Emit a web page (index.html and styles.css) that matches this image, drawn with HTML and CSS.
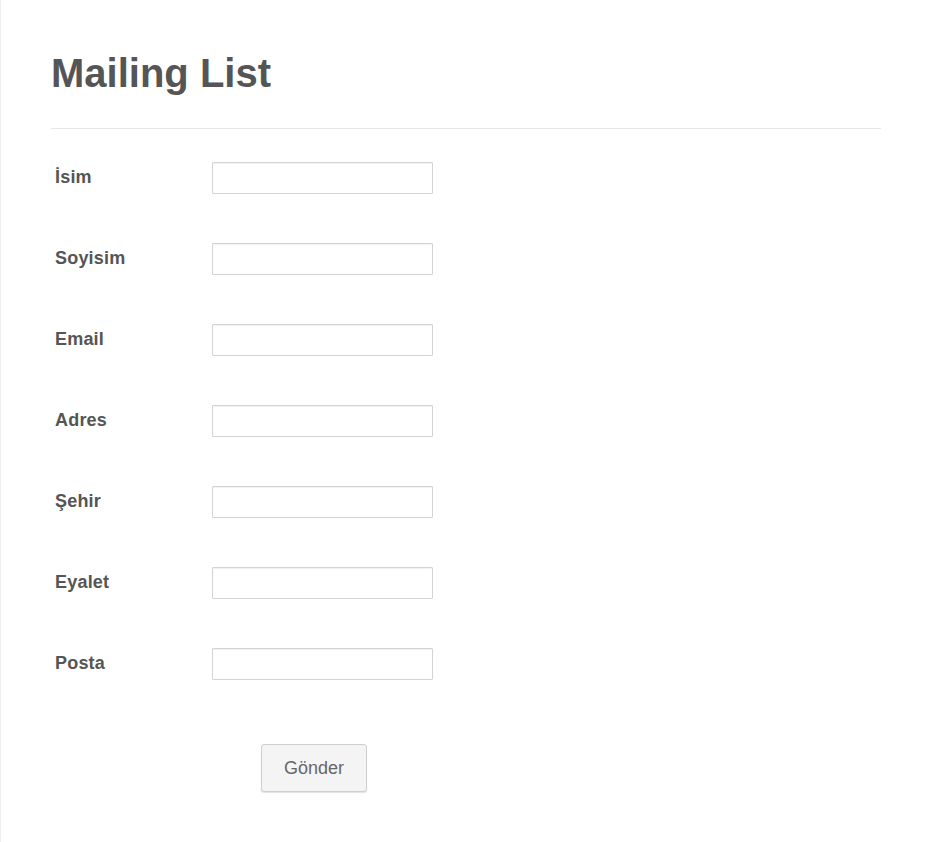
FILE: index.html
```html
<!DOCTYPE html>
<html lang="tr">
<head>
    <meta charset="UTF-8">
    <meta name="viewport" content="width=device-width, initial-scale=1.0">
    <title>Mailing List</title>
    <link rel="stylesheet" href="styles.css">
</head>
<body>
    <form class="form-all">
        <div class="form-header">
            <h1>Mailing List</h1>
        </div>
        <ul class="form-list">
            <li class="form-line">
                <label for="isim">İsim</label>
                <input type="text" id="isim">
            </li>
            <li class="form-line">
                <label for="soyisim">Soyisim</label>
                <input type="text" id="soyisim">
            </li>
            <li class="form-line">
                <label for="email">Email</label>
                <input type="email" id="email">
            </li>
            <li class="form-line">
                <label for="adres">Adres</label>
                <input type="text" id="adres">
            </li>
            <li class="form-line">
                <label for="sehir">Şehir</label>
                <input type="text" id="sehir">
            </li>
            <li class="form-line">
                <label for="eyalet">Eyalet</label>
                <input type="text" id="eyalet">
            </li>
            <li class="form-line">
                <label for="posta">Posta</label>
                <input type="text" id="posta">
            </li>
            <li class="form-submit">
                <button type="submit">Gönder</button>
            </li>
        </ul>
    </form>
</body>
</html>
```

FILE: styles.css
```css
:root {
    --text-color: #555555;
    --border-color: #d3d3d3;
    --line-color: #e6e6e6;
}
html, body {
    margin: 0;
    padding: 0;
    background-color: #ffffff;
}
body {
    font-family: "Liberation Sans", Arial, sans-serif;
    color: var(--text-color);
}
.form-all {
    min-height: 842px;
    box-sizing: border-box;
    border-left: 1px solid #eeeeee;
    padding: 0 49px 0 50px;
}
.form-header {
    padding-top: 49px;
    padding-bottom: 31px;
    border-bottom: 1px solid var(--line-color);
}
.form-header h1 {
    margin: 0;
    font-size: 40px;
    line-height: 48px;
    font-weight: 700;
}
.form-list {
    list-style: none;
    margin: 0;
    padding: 33px 0 0 0;
}
.form-line {
    display: flex;
    align-items: center;
    height: 32px;
    margin-bottom: 49px;
}
.form-line label {
    width: 157px;
    padding-left: 4px;
    padding-bottom: 1px;
    font-size: 18px;
    font-weight: 700;
    letter-spacing: 0.2px;
}
.form-line input {
    width: 221px;
    height: 32px;
    box-sizing: border-box;
    margin: 0;
    border: 1px solid var(--border-color);
    border-radius: 1px;
    box-shadow: inset 0 1px 1px rgba(0, 0, 0, 0.06);
    font-family: inherit;
    font-size: 15px;
    padding: 4px 6px;
}
.form-submit {
    padding-top: 15px;
    padding-left: 210px;
}
.form-submit button {
    width: 106px;
    height: 48px;
    background-color: #f4f4f4;
    border: 1px solid #cfcfcf;
    border-radius: 3px;
    box-shadow: 0 1px 1px rgba(0, 0, 0, 0.12);
    color: #666666;
    font-family: inherit;
    font-size: 18px;
    cursor: pointer;
}
.form-submit button:hover {
    background-color: #ececec;
}
```
